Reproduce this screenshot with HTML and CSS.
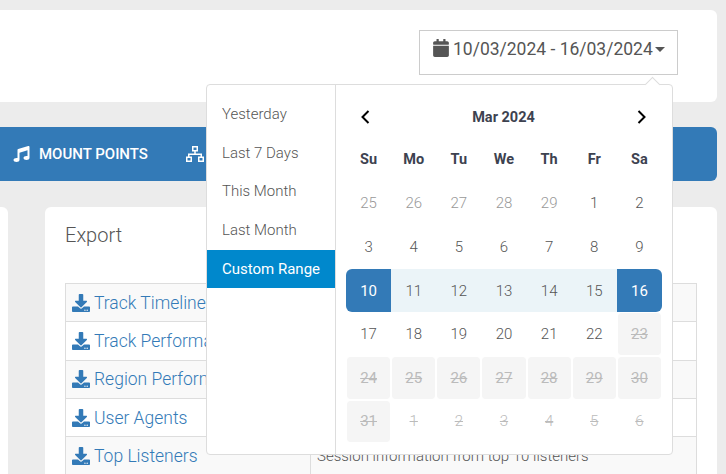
FILE: index.html
```html
<!DOCTYPE html>
<html lang="en">
<head>
    <meta charset="UTF-8">
    <title>Reports - Export</title>
    <link rel="stylesheet" href="styles.css">
</head>
<body>
    <div class="page">
        <section class="top-card">
            <div class="date-picker">
                <svg class="icon-calendar" viewBox="0 0 448 512"><path d="M12 192h424c6.6 0 12 5.4 12 12v260c0 26.5-21.5 48-48 48H48c-26.5 0-48-21.5-48-48V204c0-6.6 5.4-12 12-12zm436-44v-36c0-26.5-21.5-48-48-48h-48V12c0-6.6-5.4-12-12-12h-40c-6.6 0-12 5.4-12 12v52H160V12c0-6.6-5.4-12-12-12h-40c-6.6 0-12 5.4-12 12v52H48C21.5 64 0 85.5 0 112v36c0 6.6 5.4 12 12 12h424c6.6 0 12-5.4 12-12z"/></svg>
                <span>10/03/2024 - 16/03/2024</span>
                <span class="caret"></span>
            </div>
        </section>

        <nav class="main-nav">
            <a href="#">
                <svg class="nav-icon" viewBox="0 0 512 512"><path d="M511.99 32.01c0-21.71-21.1-37.01-41.6-30.51L150.4 96c-13.3 4.2-22.4 16.5-22.4 30.5v261.42c-10.05-2.38-20.72-3.92-32-3.92-53.02 0-96 28.65-96 64s42.98 64 96 64 96-28.65 96-64V214.31l256-75.02v184.63c-10.05-2.38-20.72-3.92-32-3.92-53.02 0-96 28.65-96 64s42.98 64 96 64 96-28.65 96-64l-.01-351.99z"/></svg>
                MOUNT POINTS
            </a>
            <a href="#">
                <svg class="nav-icon-wide" viewBox="1 0 18 16"><path fill-rule="evenodd" d="M7 0h6v5.500H7zM8.500 1.500v2.500h3V1.500zM9.250 5.500h1.500v2h-1.500zM3 7.500h14v3h-1.500V9h-11v1.500H3zM1 10.500h6V16H1zM2.500 12v2.500h3V12zM13 10.500h6V16h-6zM14.500 12v2.500h3V12z"/></svg>
            </a>
        </nav>

        <div class="content">
            <div class="side-card"></div>
            <section class="export-card">
                <h3>Export</h3>
                <table class="export-table">
                    <tr>
                        <td><a href="#"><svg class="icon-download" viewBox="0 0 512 512"><use href="#download"/></svg>Track Timeline</a></td>
                        <td></td>
                    </tr>
                    <tr>
                        <td><a href="#"><svg class="icon-download" viewBox="0 0 512 512"><use href="#download"/></svg>Track Performance</a></td>
                        <td></td>
                    </tr>
                    <tr>
                        <td><a href="#"><svg class="icon-download" viewBox="0 0 512 512"><use href="#download"/></svg>Region Performance</a></td>
                        <td></td>
                    </tr>
                    <tr>
                        <td><a href="#"><svg class="icon-download" viewBox="0 0 512 512"><use href="#download"/></svg>User Agents</a></td>
                        <td></td>
                    </tr>
                    <tr>
                        <td><a href="#"><svg class="icon-download" viewBox="0 0 512 512"><use href="#download"/></svg>Top Listeners</a></td>
                        <td>Session information from top 10 listeners</td>
                    </tr>
                </table>
            </section>
        </div>
    </div>

    <svg class="defs" width="0" height="0"><defs><path id="download" d="M216 0h80c13.300 0 24 10.700 24 24v168h87.700c17.800 0 26.700 21.500 14.100 34.100L269.700 378.300c-7.500 7.500-19.800 7.500-27.300 0L90.100 226.100c-12.600-12.600-3.700-34.100 14.100-34.100H192V24c0-13.300 10.700-24 24-24zm296 376v112c0 13.300-10.700 24-24 24H24c-13.300 0-24-10.700-24-24V376c0-13.300 10.700-24 24-24h146.700l49 49c20.100 20.100 52.500 20.100 72.600 0l49-49H488c13.300 0 24 10.700 24 24zm-124 88c0-11-9-20-20-20s-20 9-20 20 9 20 20 20 20-9 20-20zm64 0c0-11-9-20-20-20s-20 9-20 20 9 20 20 20 20-9 20-20z"/></defs></svg>

    <!-- Date range dropdown -->
    <div class="range-popup">
        <ul class="ranges">
            <li>Yesterday</li>
            <li>Last 7 Days</li>
            <li>This Month</li>
            <li>Last Month</li>
            <li class="active">Custom Range</li>
        </ul>
        <div class="calendar">
            <div class="cal-head">
                <svg class="arrow" viewBox="0 0 12 16"><path d="M9.500 2 3.500 8l6 6"/></svg>
                <span>Mar 2024</span>
                <svg class="arrow" viewBox="0 0 12 16"><path d="M2.500 2l6 6-6 6"/></svg>
            </div>
            <div class="cal-grid">
                <div class="dow">Su</div><div class="dow">Mo</div><div class="dow">Tu</div><div class="dow">We</div><div class="dow">Th</div><div class="dow">Fr</div><div class="dow">Sa</div>

                <div class="day off">25</div><div class="day off">26</div><div class="day off">27</div><div class="day off">28</div><div class="day off">29</div><div class="day">1</div><div class="day">2</div>

                <div class="day">3</div><div class="day">4</div><div class="day">5</div><div class="day">6</div><div class="day">7</div><div class="day">8</div><div class="day">9</div>

                <div class="day start">10</div><div class="day between">11</div><div class="day between">12</div><div class="day between">13</div><div class="day between">14</div><div class="day between">15</div><div class="day end">16</div>

                <div class="day">17</div><div class="day">18</div><div class="day">19</div><div class="day">20</div><div class="day">21</div><div class="day">22</div><div class="day disabled">23</div>

                <div class="day disabled">24</div><div class="day disabled">25</div><div class="day disabled">26</div><div class="day disabled">27</div><div class="day disabled">28</div><div class="day disabled">29</div><div class="day disabled">30</div>

                <div class="day disabled">31</div><div class="day struck">1</div><div class="day struck">2</div><div class="day struck">3</div><div class="day struck">4</div><div class="day struck">5</div><div class="day struck">6</div>
            </div>
        </div>
    </div>
</body>
</html>
```

FILE: styles.css
```css
html, body {
    margin: 0;
    padding: 0;
    height: 100%;
    overflow: hidden;
}
body {
    background-color: #ececec;
    color: #555;
    font-family: Roboto, "Liberation Sans", sans-serif;
    font-weight: 300;
    position: relative;
}
.page {
    padding: 10px 9px 0 0;
    height: 100%;
    box-sizing: border-box;
    overflow: hidden;
}
.defs {
    position: absolute;
}

/* Top card with the date button */
.top-card {
    background-color: #fff;
    height: 92px;
    border-radius: 0 6px 6px 0;
    display: flex;
    justify-content: flex-end;
    padding: 20px 39px 0 0;
    box-sizing: border-box;
}
.date-picker {
    width: 259px;
    height: 45px;
    box-sizing: border-box;
    border: 1px solid #ccc;
    display: flex;
    align-items: center;
    padding: 0 0 8px 13px;
    font-size: 17.500px;
    font-weight: 400;
    color: #555;
}
.icon-calendar {
    width: 16px;
    height: 18px;
    fill: #555;
    margin: 0 4px 2px 0;
}
.caret {
    width: 0;
    height: 0;
    border-left: 5px solid transparent;
    border-right: 5px solid transparent;
    border-top: 5px solid #555;
    margin-left: 2px;
    margin-top: 2px;
}

/* Blue nav */
.main-nav {
    margin-top: 25px;
    height: 54px;
    background-color: #337ab7;
    border-radius: 0 6px 6px 0;
    display: flex;
    align-items: center;
    padding-left: 13px;
    gap: 38px;
}
.main-nav a {
    color: #fff;
    text-decoration: none;
    font-size: 15px;
    font-weight: 500;
    display: flex;
    align-items: center;
    gap: 9px;
}
.nav-icon {
    width: 17px;
    height: 16px;
    fill: #fff;
}
.nav-icon-wide {
    width: 18px;
    height: 16px;
    fill: #fff;
}

/* Content cards */
.content {
    margin-top: 26px;
    display: flex;
    gap: 37px;
}
.side-card {
    width: 8px;
    height: 300px;
    background-color: #fff;
    border-radius: 0 6px 0 0;
    flex-shrink: 0;
}
.export-card {
    flex: 1;
    height: 300px;
    background-color: #fff;
    border-radius: 6px 6px 0 0;
    padding: 15px 20px 0 20px;
    box-sizing: border-box;
}
.export-card h3 {
    margin: 0 0 35px;
    font-size: 20px;
    line-height: 26px;
    font-weight: 300;
    color: #555;
}
.export-table {
    width: 100%;
    border-collapse: collapse;
    table-layout: fixed;
    font-size: 15px;
}
.export-table td {
    border: 1px solid #ddd;
    height: 38.300px;
    padding: 0 6px;
    box-sizing: border-box;
    white-space: nowrap;
    overflow: hidden;
}
.export-table td:first-child {
    width: 245px;
}
.export-table tr:nth-child(odd) td {
    background-color: #f9f9f9;
}
.export-table a {
    color: #337ab7;
    text-decoration: none;
    font-size: 17.500px;
    display: flex;
    align-items: center;
}
.icon-download {
    width: 18px;
    height: 18px;
    fill: #337ab7;
    margin-right: 4px;
    flex-shrink: 0;
}

/* Date range dropdown */
.range-popup {
    position: absolute;
    left: 206px;
    top: 84px;
    width: 467px;
    height: 371px;
    box-sizing: border-box;
    background-color: #fff;
    border: 1px solid #ddd;
    border-radius: 4px;
    display: flex;
}
.range-popup::before {
    content: "";
    position: absolute;
    right: 14px;
    top: -6px;
    width: 10px;
    height: 10px;
    background-color: #fff;
    border-left: 1px solid #ddd;
    border-top: 1px solid #ddd;
    transform: rotate(45deg);
}
.ranges {
    list-style: none;
    margin: 0;
    padding: 10px 0 0;
    width: 128px;
    border-right: 1px solid #ddd;
    flex-shrink: 0;
    font-size: 15px;
    color: #555;
}
.ranges li {
    height: 38.700px;
    line-height: 38px;
    padding-left: 15px;
}
.ranges li.active {
    background-color: #08c;
    color: #fff;
    font-weight: 400;
}
.calendar {
    flex: 1;
    padding: 12px 10px 0 10px;
    min-width: 0;
}
.cal-head {
    display: flex;
    justify-content: space-between;
    align-items: center;
    height: 40px;
    margin-bottom: 1px;
    padding: 0 14px 0 13px;
    font-size: 14.500px;
    font-weight: 700;
    color: #3d4250;
}
.arrow {
    width: 12px;
    height: 16px;
    fill: none;
    stroke: #000;
    stroke-width: 2;
}
.cal-grid {
    display: grid;
    grid-template-columns: repeat(7, 1fr);
    grid-auto-rows: 43.600px;
    width: 316px;
}
.dow {
    display: flex;
    align-items: center;
    justify-content: center;
    font-size: 14.500px;
    font-weight: 700;
    color: #3d4250;
}
.day {
    display: flex;
    align-items: center;
    justify-content: center;
    font-size: 15px;
    color: #555;
}
.day.off {
    color: #999;
}
.day.between {
    background-color: #ebf4f8;
}
.day.start, .day.end {
    background-color: #337ab7;
    color: #fff;
    font-weight: 400;
}
.day.start {
    border-radius: 6px 0 0 6px;
}
.day.end {
    border-radius: 0 6px 6px 0;
}
.day.disabled {
    background-color: #f5f5f5;
    background-clip: padding-box;
    border: 1px solid #fff;
    border-radius: 4px;
    box-sizing: border-box;
    color: #bbb;
    text-decoration: line-through;
    font-weight: 400;
}
.day.struck {
    color: #bbb;
    text-decoration: line-through;
}
```
